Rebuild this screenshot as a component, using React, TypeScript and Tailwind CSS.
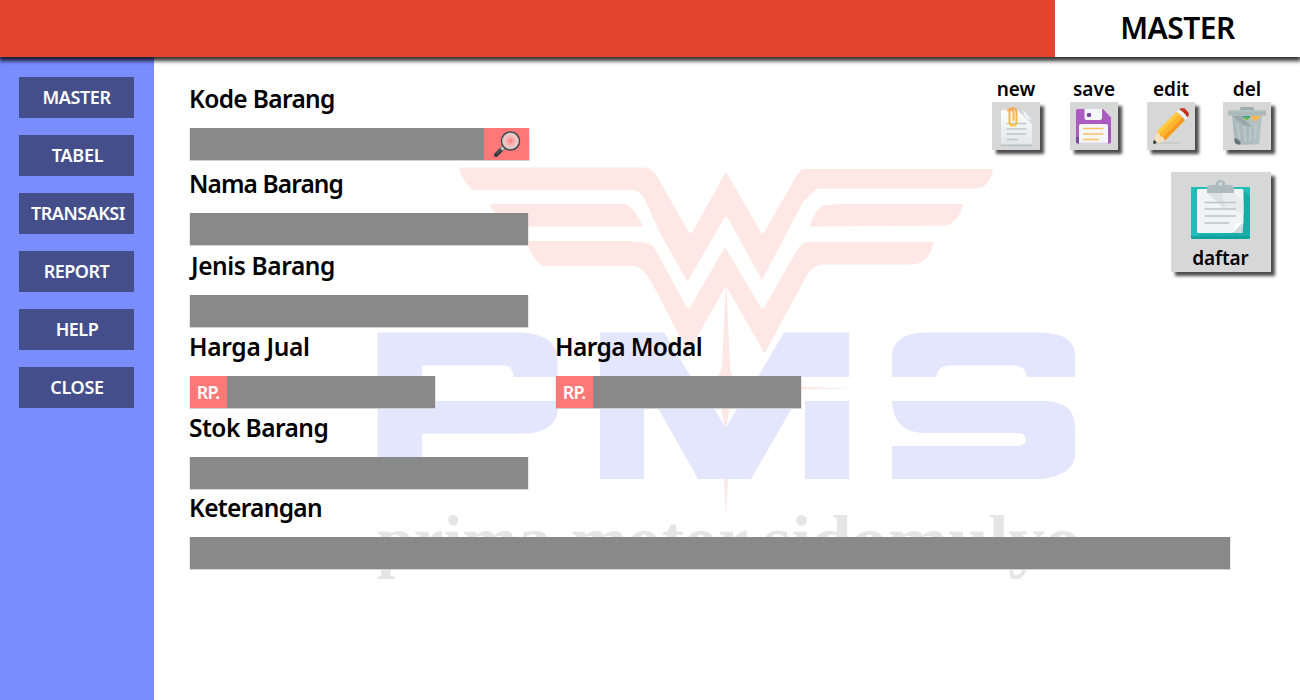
import React from "react";

const MENU = [
  { label: "MASTER", cls: "tracking-[-0.4px]" },
  { label: "TABEL", cls: "tracking-[-0.3px] pl-[2px]" },
  { label: "TRANSAKSI", cls: "tracking-[-0.5px] pl-[3px]" },
  { label: "REPORT", cls: "tracking-[-0.5px]" },
  { label: "HELP", cls: "tracking-[-0.5px] pl-px" },
  { label: "CLOSE", cls: "tracking-[-0.3px] pl-px" },
];

function Watermark() {
  return (
    <svg className="pointer-events-none absolute left-0 top-0" width="1300" height="700" viewBox="0 0 1300 700">
      <g fill="#fde8e5">
        <path d="M459 167.5H645Q651 167.5 657 176L688 231Q690 235 693 231L726 171.5L760 231Q762 236 765 231L793 182Q800 169 804 169H993C991 180 985 188.500 976 188.500H820Q815 189 812 193L803 202L762 280L729 220Q726 214 723 220L687.500 281.500L660 233L645 200Q639 190 633 190H473Q463 183 459 167.500Z" />
        <path d="M490 204H624Q632 204 643 226.500H530Q496 224 490 204Z" />
        <path d="M824 205.500L840 204H963Q959 222 946 225.500L810 226.500Q816 207 824 205.500Z" />
        <path d="M526 241H628L646 242.500Q652 243 656 251L686 306Q688.500 310 691 306L725 247L760 306Q762 311 765 306L796 252Q802 242 807 242H933.500Q930 264 911 264.500H822Q812 266 807 275L764.500 353.500L729 291Q726 285 723 291L688 353L651 281Q642 266 634 266H543Q534 262 526 241Z" />
        <path d="M725.500 289H726.500L730 365Q730 375 735 377Q760 387 853 388.500Q760 390 740 393Q731 396 730 408L725.500 430L721 408Q720 396 711 393Q690 390 600 388.500Q690 387 716 377Q721 375 722 365Z" />
        <path d="M724 478H728L726 517Z" />
      </g>
      <g fill="#e3e6fd">
        <path d="M377.500 332.500H522Q557.500 335 557.500 360V377H513.500Q513 365.500 504 365.500H422V377H377.500Z" />
        <path d="M377.500 401H557.500V412Q554 433.500 522 433.500H422V479H377.500Z" />
        <path d="M600 332.500H664L691 377H600Z" />
        <path d="M784 332.500H849V377H758Z" />
        <path d="M600 401H644V479H600Z" />
        <path d="M805 401H849V479H805Z" />
        <path d="M654 401H710L725.500 428L742 401H796L751 479H698Z" />
        <path d="M892 377V357Q892 334 924 332.500H1042Q1075 334 1075 355V377H1027Q1025 365.500 1015 365.500H948Q938 365.500 936 377Z" />
        <path d="M892 401H1047Q1075 403 1075 427V457Q1072 475 1041 479H892V446H1017C1029 446 1029 433 1017 433H922Q893 431 892 401Z" />
      </g>
      <g fill="#e5e5e5" className="font-['Liberation_Serif',serif] text-[70px] font-bold">
        <text x="377" y="564" textLength="174" lengthAdjust="spacingAndGlyphs">prima</text>
        <text x="571" y="564" textLength="177" lengthAdjust="spacingAndGlyphs">motor</text>
        <text x="763" y="564" textLength="318" lengthAdjust="spacingAndGlyphs">sidomulyo</text>
      </g>
    </svg>
  );
}

function NewIcon() {
  return (
    <svg width="48" height="48" viewBox="0 0 48 48">
      <defs>
        <linearGradient id="sheet" x1="0" y1="0" x2="0" y2="1">
          <stop offset="0" stopColor="#fdfdfd" />
          <stop offset="1" stopColor="#e2e7e7" />
        </linearGradient>
        <linearGradient id="clip" x1="0" y1="0" x2="0" y2="1">
          <stop offset="0" stopColor="#f6a95c" />
          <stop offset="1" stopColor="#fdc22e" />
        </linearGradient>
      </defs>
      <rect x="9" y="40" width="31" height="4" rx="1.500" fill="#b4bfbf" />
      <path d="M10.500 8H31L40 17V41Q40 42.500 38.500 42.500H10.500Q9 42.500 9 41V9.500Q9 8 10.500 8Z" fill="url(#sheet)" />
      <path d="M25 8H31L40 17V22Z" fill="#d3dadb" />
      <path d="M31 8L39.500 17.500Q32 19 31 8Z" fill="#eef2f2" />
      <path d="M14.500 21.500H34.500M14.500 27H34.500M14.500 32H34.500M14.500 37.500H26" stroke="#bcc9cb" strokeWidth="1.300" />
      <path d="M16 8.500Q19 5 22.500 6.500Q24.500 7.500 24.500 11V19.500Q24.500 23.500 21 23.500Q17.500 23.500 17.500 19.500V10.500Q17.500 7.500 20 8Q21.500 8.500 21.500 10V18" fill="none" stroke="url(#clip)" strokeWidth="2" strokeLinecap="round" />
    </svg>
  );
}

function SaveIcon() {
  return (
    <svg width="48" height="48" viewBox="0 0 48 48">
      <path d="M8 7H33L41 15.500V40Q41 41.500 39.500 41.500H8Q6 41.500 6 39.500V8.500Q6 7 8 7Z" fill="#ac5cc0" />
      <path d="M32 16L41 27V38L32 20Z" fill="#9846ae" opacity=".35" />
      <path d="M6 35H9V41.500H8Q6 41.500 6 39.500Z" fill="#744a9e" />
      <path d="M14.500 7H32V16Q32 18 30 18H16.500Q14.500 18 14.500 16Z" fill="#f5f6f8" />
      <rect x="17" y="11" width="4" height="4" rx="1" fill="#744a9e" />
      <path d="M11 22H36Q38 22 38 24V41.500H9V24Q9 22 11 22Z" fill="#f5f6f8" />
      <path d="M9 40.500H38V41.500H9Z" fill="#dadce2" />
      <path d="M13 26.500H33.500M13 32H33.500M13 37.500H29" stroke="#fbc064" strokeWidth="1.400" />
    </svg>
  );
}

function EditIcon() {
  return (
    <svg width="48" height="48" viewBox="0 0 48 48">
      <path d="M9 41.500H33V40.500H16Z" fill="#b9c4c5" />
      <path d="M9.500 30L29.500 10L38 18L18 38.500Z" fill="#fdb52e" />
      <path d="M9.500 30L29.500 10L32 12.500L12 32.500Z" fill="#ffcb45" />
      <path d="M15.500 36L35.500 15.500L38 18L18 38.500Z" fill="#f49a22" />
      <path d="M9.500 30L6 41L7 42L18 38.500L16 35L13 34.500L12.500 31.500Z" fill="#f6dfbd" />
      <path d="M7 37.500L6 41L7 42L10 41Z" fill="#293543" />
      <path d="M29.500 10L32.500 7L41 15.500L38 18Q36 12 29.500 10Z" fill="#f3f6f7" />
      <path d="M32 7.500Q35 5.500 37 6L41.500 10.500Q42.500 13 40.500 15.500Q37 9.500 32 7.500Z" fill="#bd2c19" />
      <path d="M33 7Q35 5.500 37 6L39 8L36.500 9Z" fill="#d4442a" />
    </svg>
  );
}

function DeleteIcon() {
  return (
    <svg width="48" height="48" viewBox="0 0 48 48">
      <path d="M9 13H39L36.500 40Q36 42.500 33 42.500H14.500Q12 42.500 11.500 40Z" fill="#b3c0c1" />
      <path d="M9.500 14H17L33 30L32 36L28 42.500H20L11 33Z" fill="#acb9bb" />
      <path d="M14.500 22L16.500 36M21.500 24L22.500 39M33 22L31.500 37M27.500 24L27 39" stroke="#bac6c8" strokeWidth="2.400" strokeLinecap="round" />
      <path d="M9.500 14H18L29 25L22 24Z" fill="#99a7a9" />
      <path d="M11.500 36Q17 37 18 42.500H15Q12 42 11.500 39Z" fill="#66757a" />
      <path d="M19 14H28L24 18.500Z" fill="#6dbd20" />
      <path d="M19 14H28L27 15.500H20.500Z" fill="#31a19a" />
      <path d="M27 14H38L32 20Z" fill="#fdb84f" />
      <path d="M18.500 5H29.500Q31 5 31 6.500V8.500H17V6.500Q17 5 18.500 5Z" fill="#9eabad" />
      <path d="M7 8H41.500Q43 8 43 9.500V13.500H5V9.500Q5 8 7 8Z" fill="#abb9bb" />
      <path d="M6 8.800H42" stroke="#bdc9ca" />
    </svg>
  );
}

function ClipboardIcon() {
  return (
    <svg width="60" height="60" viewBox="0 0 60 60">
      <rect x="1" y="7" width="59" height="52" rx="1.500" fill="#12a59e" />
      <rect x="1" y="7" width="59" height="49" rx="1" fill="#20beb6" />
      <path d="M52 9L60 17V56H51Z" fill="#17ada6" />
      <path d="M8 54L13 59H55L49 53Z" fill="#0f9d97" opacity=".5" />
      <path d="M8.500 9H52Q53.500 9 53.500 10.500V42L42.500 53H8.500Q7 53 7 51.500V10.500Q7 9 8.500 9Z" fill="#f1f4f5" />
      <path d="M17 13H44L53.500 22V34L36 29Z" fill="#e8ecee" />
      <path d="M17 13H32L36 30Z" fill="#d9dfe1" opacity=".8" />
      <path d="M42.500 53L53.500 42L52.500 53Z" fill="#d3d9db" />
      <path d="M42.500 53L45 45Q46 43 53.500 42L44.500 51.500Z" fill="#fcfdfd" />
      <path d="M14.500 22.500H46M14.500 29H46M14.500 36H46M14.500 43H39" stroke="#b9c5c8" strokeWidth="1.500" />
      <path d="M17 13V9Q17 5 21 5H25.500Q26 0 30.500 0Q35 0 35.500 5H40Q44 5 44 9V13Z" fill="#aebbbe" />
      <circle cx="30.500" cy="4" r="2" fill="#cfd5d7" />
    </svg>
  );
}

function SearchIcon() {
  return (
    <svg width="28" height="28" viewBox="0 0 28 28">
      <defs>
        <radialGradient id="lens">
          <stop offset="0" stopColor="#ff7d7d" />
          <stop offset=".45" stopColor="#f7b4b4" />
          <stop offset="1" stopColor="#ecdcdc" />
        </radialGradient>
      </defs>
      <path d="M3 25L10 18" stroke="#363b3d" strokeWidth="4" strokeLinecap="round" />
      <path d="M4 23.500L9.500 18" stroke="#6d7275" strokeWidth="1" />
      <path d="M8.500 19.500L11.500 16.500" stroke="#b9d2dc" strokeWidth="3.200" />
      <circle cx="17.500" cy="11" r="9" fill="url(#lens)" stroke="#3f4649" strokeWidth="1.500" />
      <circle cx="17.500" cy="11" r="7.800" fill="none" stroke="#b7c0c3" strokeWidth=".6" />
    </svg>
  );
}

function Label({ text, cls }: { text: string; cls: string }) {
  return (
    <div className={`h-[43px] whitespace-nowrap pt-[2px] text-[24.5px] font-semibold leading-6 text-black ${cls}`}>{text}</div>
  );
}

function Box({ width, children }: { width: string; children?: React.ReactNode }) {
  return <div className={`ml-px flex h-8 bg-[#898989] shadow-[0_0.5px_0_0.5px_#d2d2d2] ${width}`}>{children}</div>;
}

function Rupiah() {
  return (
    <span className="flex w-[37px] items-center justify-center bg-[#ff7878] pr-px text-[18px] font-semibold tracking-[-1px] text-white">
      RP.
    </span>
  );
}

function Tool({ label, children }: { label: string; children: React.ReactNode }) {
  return (
    <div className="flex w-12 flex-col items-center">
      <span className="h-[25px] text-[19px] font-semibold leading-6 text-black">{label}</span>
      <button className="size-12 bg-[#d7d7d7] shadow-[4px_4px_3px_rgba(0,0,0,0.7)]">{children}</button>
    </div>
  );
}

export default function App() {
  return (
    <div className="relative flex h-[700px] w-[1300px] flex-col overflow-hidden bg-white font-['Noto_Sans','Open_Sans',sans-serif]">
      <header className="relative z-10 flex h-[57px] shrink-0 bg-white shadow-[0_3px_4px_1px_rgba(0,0,0,0.8)]">
        <div className="w-[1055px] bg-[#e4452f]" />
        <h1 className="flex flex-1 items-center justify-center pb-px text-[30px] font-semibold leading-none tracking-[-0.5px] text-black">
          MASTER
        </h1>
      </header>
      <div className="flex flex-1">
        <nav className="flex w-[154px] flex-col gap-[17px] bg-[#798dff] pl-[19px] pt-5">
          {MENU.map((m) => (
            <button
              key={m.label}
              className={`flex h-[41px] w-[115px] shrink-0 items-center justify-center bg-[#444e8a] text-[18px] font-semibold text-white ${m.cls}`}
            >
              {m.label}
            </button>
          ))}
        </nav>
        <main className="flex flex-1 justify-between">
          <Watermark />
          <form className="relative w-[1042px] shrink-0 pl-[35px] pt-7">
            <div className="mb-[10px]">
              <Label text="Kode Barang" cls="tracking-[-0.65px]" />
              <Box width="w-[339px]">
                <span className="ml-auto flex w-[45px] justify-center bg-[#ff7878] pt-[2px]">
                  <SearchIcon />
                </span>
              </Box>
            </div>
            <div className="mb-[7px]">
              <Label text="Nama Barang" cls="tracking-[-0.9px]" />
              <Box width="w-[338px]" />
            </div>
            <div className="mb-[6px]">
              <Label text="Jenis Barang" cls="tracking-[-0.4px] pl-[2px]" />
              <Box width="w-[338px]" />
            </div>
            <div className="mb-[6px] flex gap-[120px]">
              <div>
                <Label text="Harga Jual" cls="tracking-[-0.3px]" />
                <Box width="w-[245px]">
                  <Rupiah />
                </Box>
              </div>
              <div>
                <Label text="Harga Modal" cls="tracking-[-0.6px]" />
                <Box width="w-[245px]">
                  <Rupiah />
                </Box>
              </div>
            </div>
            <div className="mb-[5px]">
              <Label text="Stok Barang" cls="tracking-[-0.55px]" />
              <Box width="w-[338px]" />
            </div>
            <div>
              <Label text="Keterangan" cls="tracking-[-0.7px]" />
              <Box width="w-[1040px]" />
            </div>
          </form>
          <aside className="relative -ml-[204px] mr-[29px] flex w-[279px] shrink-0 flex-col items-end pt-5">
            <div className="flex w-full">
              <Tool label="new">
                <NewIcon />
              </Tool>
              <div className="ml-[30px]">
                <Tool label="save">
                  <SaveIcon />
                </Tool>
              </div>
              <div className="ml-[29px]">
                <Tool label="edit">
                  <EditIcon />
                </Tool>
              </div>
              <div className="ml-7">
                <Tool label="del">
                  <DeleteIcon />
                </Tool>
              </div>
            </div>
            <button className="mt-[22px] flex h-[100px] w-[100px] flex-col items-center bg-[#d7d7d7] pr-[2px] pt-2 shadow-[4px_4px_3px_rgba(0,0,0,0.7)]">
              <ClipboardIcon />
              <span className="mt-[6px] pl-px text-[19px] font-semibold leading-6 tracking-[-0.1px] text-black">daftar</span>
            </button>
          </aside>
        </main>
      </div>
    </div>
  );
}
